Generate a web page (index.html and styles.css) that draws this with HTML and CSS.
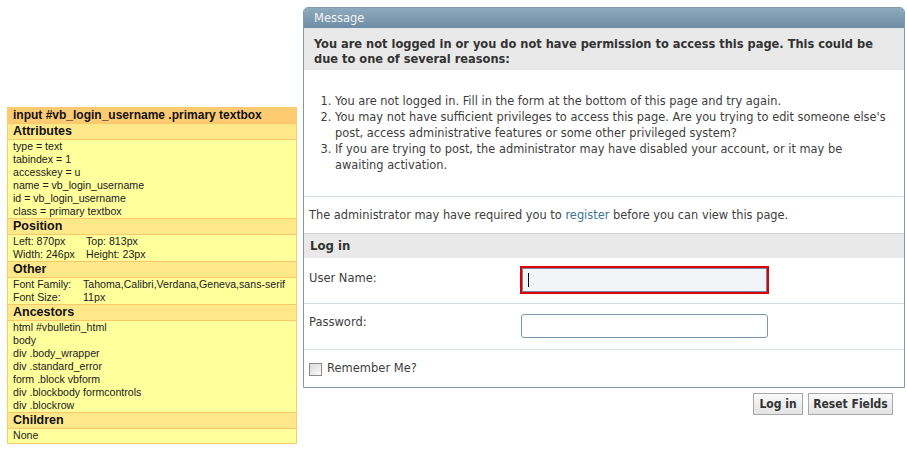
FILE: index.html
```html
<!DOCTYPE html>
<html>
<head>
<meta charset="utf-8">
<link rel="stylesheet" href="styles.css">
</head>
<body>
<div class="page">
  <div class="inspector">
    <div class="ins-title">input #vb_login_username .primary textbox</div>
    <div class="ins-head">Attributes</div>
    <div class="ins-body">
      <div>type = text</div>
      <div>tabindex = 1</div>
      <div>accesskey = u</div>
      <div>name = vb_login_username</div>
      <div>id = vb_login_username</div>
      <div>class = primary textbox</div>
    </div>
    <div class="ins-head">Position</div>
    <div class="ins-body ins-grid pos">
      <div>Left: 870px</div><div>Top: 813px</div>
      <div>Width: 246px</div><div>Height: 23px</div>
    </div>
    <div class="ins-head">Other</div>
    <div class="ins-body ins-grid other">
      <div>Font Family:</div><div>Tahoma,Calibri,Verdana,Geneva,sans-serif</div>
      <div>Font Size:</div><div>11px</div>
    </div>
    <div class="ins-head">Ancestors</div>
    <div class="ins-body">
      <div>html #vbulletin_html</div>
      <div>body</div>
      <div>div .body_wrapper</div>
      <div>div .standard_error</div>
      <div>form .block vbform</div>
      <div>div .blockbody formcontrols</div>
      <div>div .blockrow</div>
    </div>
    <div class="ins-head">Children</div>
    <div class="ins-body">
      <div>None</div>
    </div>
  </div>

  <div class="main">
    <div class="box">
      <div class="box-head">Message</div>
      <div class="intro">You are not logged in or you do not have permission to access this page. This could be due to one of several reasons:</div>
      <ol class="reasons">
        <li>You are not logged in. Fill in the form at the bottom of this page and try again.</li>
        <li>You may not have sufficient privileges to access this page. Are you trying to edit someone else's post, access administrative features or some other privileged system?</li>
        <li>If you are trying to post, the administrator may have disabled your account, or it may be awaiting activation.</li>
      </ol>
      <div class="note">The administrator may have required you to <a class="link" href="#">register</a> before you can view this page.</div>
      <div class="login-head">Log in</div>
      <div class="row row-user">
        <label class="label">User Name:</label>
        <div class="field"><div class="input focused"><span class="caret"></span></div></div>
      </div>
      <div class="row row-pass">
        <label class="label">Password:</label>
        <div class="field"><div class="input pass"></div></div>
      </div>
      <div class="row row-remember">
        <span class="check"></span><span class="remember">Remember Me?</span>
      </div>
    </div>
    <div class="actions">
      <button class="btn btn-login">Log in</button>
      <button class="btn btn-reset">Reset Fields</button>
    </div>
  </div>
</div>
</body>
</html>
```
FILE: styles.css
```css
html, body {
  margin: 0;
  padding: 0;
  background: #fff;
}
.page {
  display: flex;
  align-items: flex-start;
}

/* Inspector panel */
.inspector {
  margin-left: 7px;
  margin-top: 107px;
  width: 290px;
  box-sizing: border-box;
  border: 1px solid #fcc96a;
  border-top: none;
  font-family: "Liberation Sans", Arial, sans-serif;
  color: #111;
}
.ins-title {
  background: #fecb73;
  font-weight: bold;
  font-size: 12px;
  height: 16px;
  line-height: 16px;
  padding-left: 5px;
  white-space: nowrap;
}
.ins-head {
  background: #ffe88a;
  font-weight: bold;
  font-size: 12.5px;
  height: 15px;
  line-height: 15px;
  padding-left: 5px;
  border-top: 1px solid #fcc96a;
  border-bottom: 1px solid #fcc96a;
  margin-top: -1px;
}
.ins-title + .ins-head { margin-top: 0; }
.ins-body {
  background: #ffff9c;
  font-size: 10.6px;
  line-height: 13px;
  padding: 0 5px 1px 5px;
  color: #222;
  white-space: nowrap;
}
.ins-grid {
  display: grid;
}
.ins-grid.pos { grid-template-columns: 73px auto; }
.ins-grid.other { grid-template-columns: 70px auto; }

/* Main message box */
.main {
  margin-left: 6px;
  margin-top: 7px;
  width: 602px;
  font-family: "DejaVu Sans", Tahoma, sans-serif;
  color: #3e3e3e;
}
.box {
  border: 1px solid #7f99ad;
  border-radius: 5px 5px 0 0;
  overflow: hidden;
}
.box-head {
  height: 20px;
  line-height: 20px;
  background: linear-gradient(#8eaabd, #6e8da4);
  color: #f2f5f8;
  font-size: 11.5px;
  padding-left: 10px;
}
.intro {
  background: #e9e9e9;
  font-family: "DejaVu Sans Condensed", "DejaVu Sans", sans-serif;
  font-weight: bold;
  font-size: 12.7px;
  line-height: 15px;
  padding: 8px 10px 4px 10px;
  color: #333;
}
.reasons {
  margin: 0;
  padding: 23px 10px 23px 31px;
  font-size: 11.4px;
  line-height: 16px;
  border-bottom: 1px solid #d3dee6;
}
.note {
  font-size: 11.4px;
  line-height: 16px;
  padding: 10px 5px 10px 5px;
}
.link {
  color: #417394;
  text-decoration: none;
}
.login-head {
  background: #e9e9e9;
  border-top: 1px solid #d4d4d4;
  height: 24px;
  line-height: 24px;
  font-family: "DejaVu Sans Condensed", "DejaVu Sans", sans-serif;
  font-weight: bold;
  font-size: 13px;
  padding-left: 6px;
  color: #333;
}
.row {
  display: grid;
  grid-template-columns: 212px 1fr;
  padding: 10px 5px 0 5px;
  box-sizing: border-box;
  font-size: 11.5px;
  line-height: 15px;
}
.row-user {
  height: 46px;
  border-bottom: 1px solid #d3dee6;
}
.row-user .label { padding-top: 3px; }
.row-pass {
  height: 46px;
  border-bottom: 1px solid #d3dee6;
}
.row-pass .label { padding-top: 1px; }
.input {
  box-sizing: border-box;
  width: 247px;
  height: 24px;
  border: 1px solid #7a98ad;
  border-radius: 3px;
  background: #fff;
  position: relative;
}
.input.focused {
  margin-left: 1px;
  width: 245px;
  height: 24px;
  border-radius: 0;
  background: #f2f5f8;
  border-color: #6d8ca3;
  box-shadow: 0 0 0 2px #e10000;
}
.caret {
  position: absolute;
  left: 5px;
  top: 4px;
  width: 1px;
  height: 14px;
  background: #000;
}
.row-remember {
  display: flex;
  align-items: center;
  height: 37px;
  padding: 0 5px;
}
.check {
  width: 11px;
  height: 11px;
  border: 1px solid #8a8a8a;
  background: linear-gradient(135deg, #dcdcdc, #f8f8f8);
  margin-right: 5px;
  margin-top: 1px;
}
.remember {
  font-size: 11.5px;
}
.actions {
  display: flex;
  justify-content: flex-end;
  gap: 5px;
  padding: 5px 12px 0 0;
}
.btn {
  font-family: "DejaVu Sans Condensed", "DejaVu Sans", sans-serif;
  font-weight: bold;
  font-size: 12px;
  color: #333;
  height: 22px;
  padding: 0;
  white-space: nowrap;
  border: 1px solid #a9a9a9;
  background: linear-gradient(#fafafa, #e3e3e3);
  border-radius: 0;
}
.btn-login { width: 50px; }
.btn-reset { width: 85px; }
```
